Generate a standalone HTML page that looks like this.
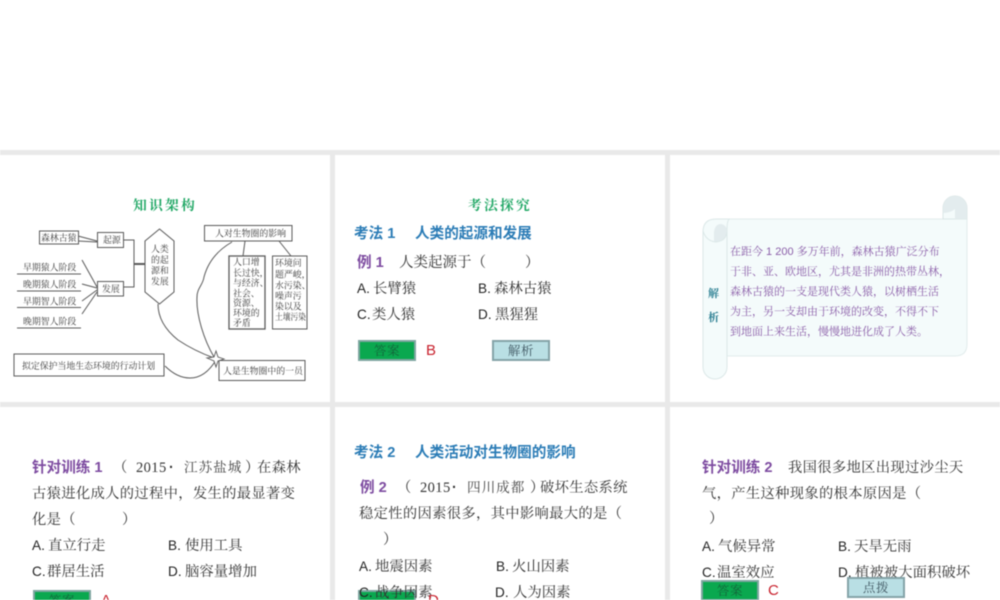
<!DOCTYPE html>
<html lang="zh"><head><meta charset="utf-8">
<style>
html,body{margin:0;padding:0;background:#fff;}
#p{position:relative;width:1000px;height:600px;overflow:hidden;background:#fff;font-family:"Liberation Sans","Noto Serif CJK SC",serif;color:#333;filter:blur(.45px);}
.g{position:absolute;background:#e9e9e9;}
.t{position:absolute;white-space:pre;font-size:14.3px;line-height:20px;height:20px;margin-top:-9px;letter-spacing:.33px;}
.o{letter-spacing:0;font-size:14.4px;}
.o i{font-style:normal;font-size:13.6px;color:#222;display:inline-block;}
.b{color:#2b7cb6;font-weight:bold;font-family:"Liberation Sans","Noto Sans CJK SC",sans-serif;font-size:14.6px;letter-spacing:0;margin-top:-9px;}
.v{color:#7d4ba0;font-weight:bold;font-family:"Liberation Sans","Noto Sans CJK SC",sans-serif;font-size:14.6px;letter-spacing:0;margin-top:-9px;}
.y{font-family:"Liberation Serif",serif;letter-spacing:.4px;font-size:14.5px;}
.k{font-size:13.6px;letter-spacing:1px;color:#444;}
.h{color:#22a866;font-size:13.8px;letter-spacing:2.2px;font-weight:bold;margin-top:-9px;}
.r{color:#c8202c;font-size:15px;letter-spacing:0;margin-top:-10px;}
.ans,.exp{position:absolute;box-sizing:border-box;width:58px;height:21px;text-align:center;font-size:12.5px;line-height:19px;letter-spacing:.6px;border:2px solid #7ea6a0;}
.ans{background:#0aa84f;color:#14633a;}
.exp{background:#b9dfe4;color:#3e5560;border-color:#84a3a8;}
.s{position:absolute;white-space:pre;font-size:11px;line-height:16px;height:16px;margin-top:-7px;color:#8a5da8;}
svg{position:absolute;left:0;top:0;}
svg text{font-family:"Noto Serif CJK SC",serif;fill:#3c3c3c;font-size:8.9px;}
</style></head>
<body><div id="p">
<div class="g" style="left:0;top:150px;width:1000px;height:5px"></div>
<div class="g" style="left:0;top:402px;width:1000px;height:5px"></div>
<div class="g" style="left:330px;top:155px;width:5px;height:445px"></div>
<div class="g" style="left:665px;top:155px;width:5px;height:445px"></div>

<svg width="1000" height="600" viewBox="0 0 1000 600">
<g fill="none" stroke="#5a5a5a" stroke-width="1">
<rect x="39.5" y="231" width="39" height="13"/>
<rect x="97.5" y="232.5" width="26" height="15"/>
<rect x="97.5" y="281.5" width="26" height="14.5"/>
<path d="M17 274H81M17 291H81M17 307.500H81M17 328H81"/>
<path d="M78 236L97 241M78 241L97 242M82 260L97 287M82 284L97 288M82 301L97 290M82 314L97 292"/>
<path d="M124 240H134V287H124"/>
<path d="M134 264H145" stroke-width="2"/>
<path d="M159.500 229L174 241V292L159.500 304L145 292V241Z"/>
<rect x="204.500" y="225.500" width="87.500" height="15.500"/>
<rect x="229" y="256" width="36" height="73" stroke-width="1.300"/>
<rect x="272.500" y="256" width="34.500" height="73"/>
<rect x="14" y="354" width="150" height="22"/>
<rect x="219" y="360.500" width="86" height="20"/>
<path d="M245 241L243 256M279 241L291 256"/>
<path d="M232 242C218 250 208 262 204 277C203 285 197 288 197 297C196 315 204 340 214 357"/>
<path d="M158 304C158 320 168 332 178 340C190 348 203 354 214 358"/>
<path d="M165 366C172 373 180 378 190 378C202 378 210 370 216 360"/>
</g>
<path d="M216 351L218 357L224 359L218 361L216 367L214 361L207 358L214 357Z" fill="#fff" stroke="#5a5a5a" stroke-width=".9"/>
<text x="41" y="241">森林古猿</text>
<text x="103" y="243">起源</text>
<text x="102" y="292">发展</text>
<text x="23" y="270.500">早期猿人阶段</text>
<text x="23" y="287.500">晚期猿人阶段</text>
<text x="23" y="304.500">早期智人阶段</text>
<text x="23" y="324.500">晚期智人阶段</text>
<text x="151" y="252">人类</text>
<text x="151" y="263">的起</text>
<text x="151" y="273.500">源和</text>
<text x="151" y="284.500">发展</text>
<text x="215" y="236.500">人对生物圈的影响</text>
<text x="233" y="265">人口增</text>
<text x="233" y="276">长过快，</text>
<text x="233" y="286">与经济、</text>
<text x="233" y="296.500">社会、</text>
<text x="233" y="306">资源、</text>
<text x="233" y="316">环境的</text>
<text x="233" y="326">矛盾</text>
<text x="275" y="266">环境问</text>
<text x="275" y="277.500">题严峻，</text>
<text x="275" y="288.500">水污染、</text>
<text x="275" y="299">噪声污</text>
<text x="275" y="309.500">染以及</text>
<text x="275" y="320" textLength="31" lengthAdjust="spacingAndGlyphs">土壤污染</text>
<text x="22" y="369">拟定保护当地生态环境的行动计划</text>
<text x="223" y="374">人是生物圈中的一员</text>

<!-- scroll -->
<path d="M727 219H967V344Q967 356 955 356H727Z" fill="#f4fbfb" stroke="#e2ecec"/>
<path d="M943 219V208A12 12 0 0 1 967 208V219Z" fill="#f4fbfb" stroke="#dbe6e6"/>
<path d="M943 213Q950 213 955 209V219H967V208A12 12 0 0 0 943 208Z" fill="#e3ecee"/>
<path d="M703 232Q703 219 716 219H730Q727 219 727 230V367A12 12 0 0 1 703 367Z" fill="#f4fbfb" stroke="#dce8e8"/>
<path d="M714 241V232Q715 224 721 224Q727 225 727 232Q726 240 716 242Z" fill="#e3ecee"/>
<path d="M703 231Q706 241 716 242Q726 241 727 232" fill="none" stroke="#dce8e8"/>
</svg>

<div class="t h" style="left:133px;top:205px">知识架构</div>

<div class="t h" style="left:468px;top:205px">考法探究</div>
<div class="t b" style="left:354px;top:233px">考法 1</div>
<div class="t b" style="left:415px;top:233px">人类的起源和发展</div>
<div class="t v" style="left:357px;top:262px">例 1</div>
<div class="t" style="left:399px;top:262px;font-size:14.500px;letter-spacing:0">人类起源于（</div>
<div class="t" style="left:525px;top:262px">）</div>
<div class="t o" style="left:357px;top:288px"><i style="width:16px">A.</i>长臂猿</div>
<div class="t o" style="left:478px;top:288px"><i style="width:16px">B.</i>森林古猿</div>
<div class="t o" style="left:357px;top:314px"><i style="width:15px">C.</i>类人猿</div>
<div class="t o" style="left:478px;top:314px"><i style="width:17px">D.</i>黑猩猩</div>
<div class="ans" style="left:358px;top:340px">答案</div>
<div class="t r" style="left:426px;top:351px">B</div>
<div class="exp" style="left:492px;top:340px">解析</div>

<div class="s" style="left:730px;top:251px">在距今 1 200 多万年前，森林古猿广泛分布</div>
<div class="s" style="left:730px;top:271px">于非、亚、欧地区，尤其是非洲的热带丛林，</div>
<div class="s" style="left:730px;top:291px">森林古猿的一支是现代类人猿，以树栖生活</div>
<div class="s" style="left:730px;top:311px">为主，另一支却由于环境的改变，不得不下</div>
<div class="s" style="left:730px;top:331px">到地面上来生活，慢慢地进化成了人类。</div>
<div class="s" style="left:708px;top:293px;color:#2c7f92;font-weight:bold">解</div>
<div class="s" style="left:708px;top:317px;color:#2c7f92;font-weight:bold">析</div>

<div class="t v" style="left:32px;top:467px">针对训练 1</div>
<div class="t" style="left:113px;top:467px">（</div>
<div class="t y" style="left:136px;top:467px">2015</div>
<div class="t" style="left:169px;top:467px;font-weight:bold">·</div>
<div class="t k" style="left:184px;top:467px">江苏盐城</div>
<div class="t" style="left:245px;top:467px">）</div>
<div class="t" style="left:257px;top:467px">在森林</div>
<div class="t" style="left:32px;top:493px">古猿进化成人的过程中，发生的最显著变</div>
<div class="t" style="left:32px;top:519px">化是（</div>
<div class="t" style="left:122px;top:519px">）</div>
<div class="t o" style="left:32px;top:545px"><i style="width:16px">A.</i>直立行走</div>
<div class="t o" style="left:168px;top:545px"><i style="width:17px">B.</i>使用工具</div>
<div class="t o" style="left:32px;top:571px"><i style="width:15px">C.</i>群居生活</div>
<div class="t o" style="left:168px;top:571px"><i style="width:17px">D.</i>脑容量增加</div>
<div class="ans" style="left:33px;top:590px">答案</div>
<div class="t r" style="left:101px;top:601px">A</div>

<div class="t b" style="left:354px;top:452px">考法 2</div>
<div class="t b" style="left:415px;top:452px">人类活动对生物圈的影响</div>
<div class="ans" style="left:358px;top:590px"></div>
<div class="t v" style="left:360px;top:487px">例 2</div>
<div class="t" style="left:397px;top:487px">（</div>
<div class="t y" style="left:420px;top:487px">2015</div>
<div class="t" style="left:452px;top:487px;font-weight:bold">·</div>
<div class="t k" style="left:467px;top:487px">四川成都</div>
<div class="t" style="left:530px;top:487px">）</div>
<div class="t" style="left:540px;top:487px">破坏生态系统</div>
<div class="t" style="left:359px;top:513px">稳定性的因素很多，其中影响最大的是（</div>
<div class="t" style="left:383px;top:539px">）</div>
<div class="t o" style="left:359px;top:566px"><i style="width:16px">A.</i>地震因素</div>
<div class="t o" style="left:496px;top:566px"><i style="width:16px">B.</i>火山因素</div>
<div class="t o" style="left:359px;top:592px"><i style="width:16px">C.</i>战争因素</div>
<div class="t o" style="left:495px;top:592px"><i style="width:18px">D.</i>人为因素</div>
<div class="t r" style="left:428px;top:601px">D</div>

<div class="t v" style="left:702px;top:467px">针对训练 2</div>
<div class="t" style="left:788px;top:467px">我国很多地区出现过沙尘天</div>
<div class="t" style="left:702px;top:493px">气，产生这种现象的根本原因是（</div>
<div class="t" style="left:709px;top:518px">）</div>
<div class="t o" style="left:702px;top:546px"><i style="width:16px">A.</i>气候异常</div>
<div class="t o" style="left:838px;top:546px"><i style="width:16px">B.</i>天旱无雨</div>
<div class="t o" style="left:702px;top:572px"><i style="width:15px">C.</i>温室效应</div>
<div class="t o" style="left:838px;top:572px"><i style="width:17px">D.</i>植被被大面积破坏</div>
<div class="ans" style="left:701px;top:580px">答案</div>
<div class="t r" style="left:768px;top:591px">C</div>
<div class="exp" style="left:847px;top:577px">点拨</div>
</div></body></html>
